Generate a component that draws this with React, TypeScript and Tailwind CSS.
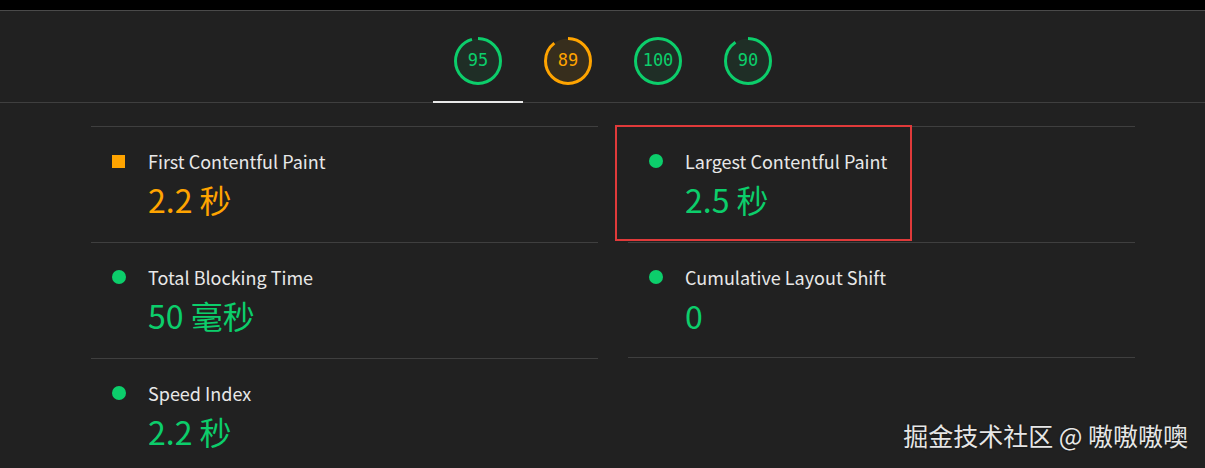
import React from 'react';

type Tone = 'pass' | 'average';

const GAUGES: { score: number; tone: Tone }[] = [
  { score: 95, tone: 'pass' },
  { score: 89, tone: 'average' },
  { score: 100, tone: 'pass' },
  { score: 90, tone: 'pass' },
];

const METRICS: { title: string; value: string; tone: Tone; shape: 'square' | 'circle' }[] = [
  { title: 'First Contentful Paint', value: '2.2 秒', tone: 'average', shape: 'square' },
  { title: 'Largest Contentful Paint', value: '2.5 秒', tone: 'pass', shape: 'circle' },
  { title: 'Total Blocking Time', value: '50 毫秒', tone: 'pass', shape: 'circle' },
  { title: 'Cumulative Layout Shift', value: '0', tone: 'pass', shape: 'circle' },
  { title: 'Speed Index', value: '2.2 秒', tone: 'pass', shape: 'circle' },
];

const COLORS: Record<Tone, { stroke: string; fill: string }> = {
  pass: { stroke: '#0cce6b', fill: 'rgba(12,206,107,0.08)' },
  average: { stroke: '#ffa400', fill: 'rgba(255,164,0,0.1)' },
};

const Gauge: React.FC<{ score: number; tone: Tone; active?: boolean }> = ({ score, tone, active }) => {
  const r = 22.5;
  const c = 2 * Math.PI * r;
  const { stroke, fill } = COLORS[tone];
  return (
    <div className="relative flex h-[91px] w-[90px] justify-center pt-[26px]">
      <div className="relative h-[48px] w-[48px]">
        <svg width="48" height="48" viewBox="0 0 48 48" className="absolute inset-0">
          <circle cx="24" cy="24" r={r} fill={fill} />
          <circle
            cx="24"
            cy="24"
            r={r}
            fill="none"
            stroke={stroke}
            strokeWidth="3"
            strokeDasharray={`${(c * score) / 100} ${c}`}
            transform="rotate(-90 24 24)"
          />
        </svg>
        <div
          className="absolute inset-0 flex items-center justify-center text-[17px] font-['DejaVu_Sans_Mono',monospace]"
          style={{ color: stroke }}
        >
          {score}
        </div>
      </div>
      {active && <div className="absolute bottom-[-1px] left-0 h-[2px] w-full bg-[#e8e8e8]" />}
    </div>
  );
};

const App: React.FC = () => {
  return (
    <div className="relative h-[468px] w-full overflow-hidden bg-[#212121] font-['Noto_Sans_CJK_SC','Noto_Sans',sans-serif]">
      <div className="h-[10px] bg-black" />
      <div className="border-t border-[#4a4a4a]" />

      {/* score gauges */}
      <div className="flex justify-center border-b border-[#3f3f3f] pl-[21px]">
        {GAUGES.map((g, i) => (
          <Gauge key={g.score + '-' + i} score={g.score} tone={g.tone} active={i === 0} />
        ))}
      </div>

      {/* metrics */}
      <div className="ml-[91px] mt-[23px] grid w-[1044px] grid-cols-2 gap-x-[30px]">
        {METRICS.map((m, i) => (
          <div
            key={m.title}
            className={`flex h-[116px] border-t border-[#3f3f3f] pl-[21px] pt-[21px] ${i === 3 ? 'border-b' : ''}`}
          >
            <div className="flex h-[26px] w-[14px] items-center">
              {m.shape === 'square' ? (
                <div className="h-[13px] w-[13px] bg-[#ffa400]" />
              ) : (
                <div className="h-[14px] w-[14px] rounded-full bg-[#0cce6b]" />
              )}
            </div>
            <div className="ml-[22px] flex flex-col">
              <div className="text-[18px] leading-[26px] text-[#e8e8e8]">{m.title}</div>
              <div
                className="mt-[5px] text-[32px] leading-[40px]"
                style={{ color: COLORS[m.tone].stroke }}
              >
                {m.value}
              </div>
            </div>
          </div>
        ))}
      </div>

      {/* annotation box */}
      <div className="absolute left-[615px] top-[125px] h-[116px] w-[297px] border-2 border-[#e03a3a]" />

      {/* watermark */}
      <div className="absolute bottom-[16px] right-[17px] text-[25px] leading-[34px] text-[#e6e6e6] [text-shadow:0_0_2px_rgba(0,0,0,0.6)]">
        掘金技术社区 @ 嗷嗷嗷噢
      </div>
    </div>
  );
};

export default App;
